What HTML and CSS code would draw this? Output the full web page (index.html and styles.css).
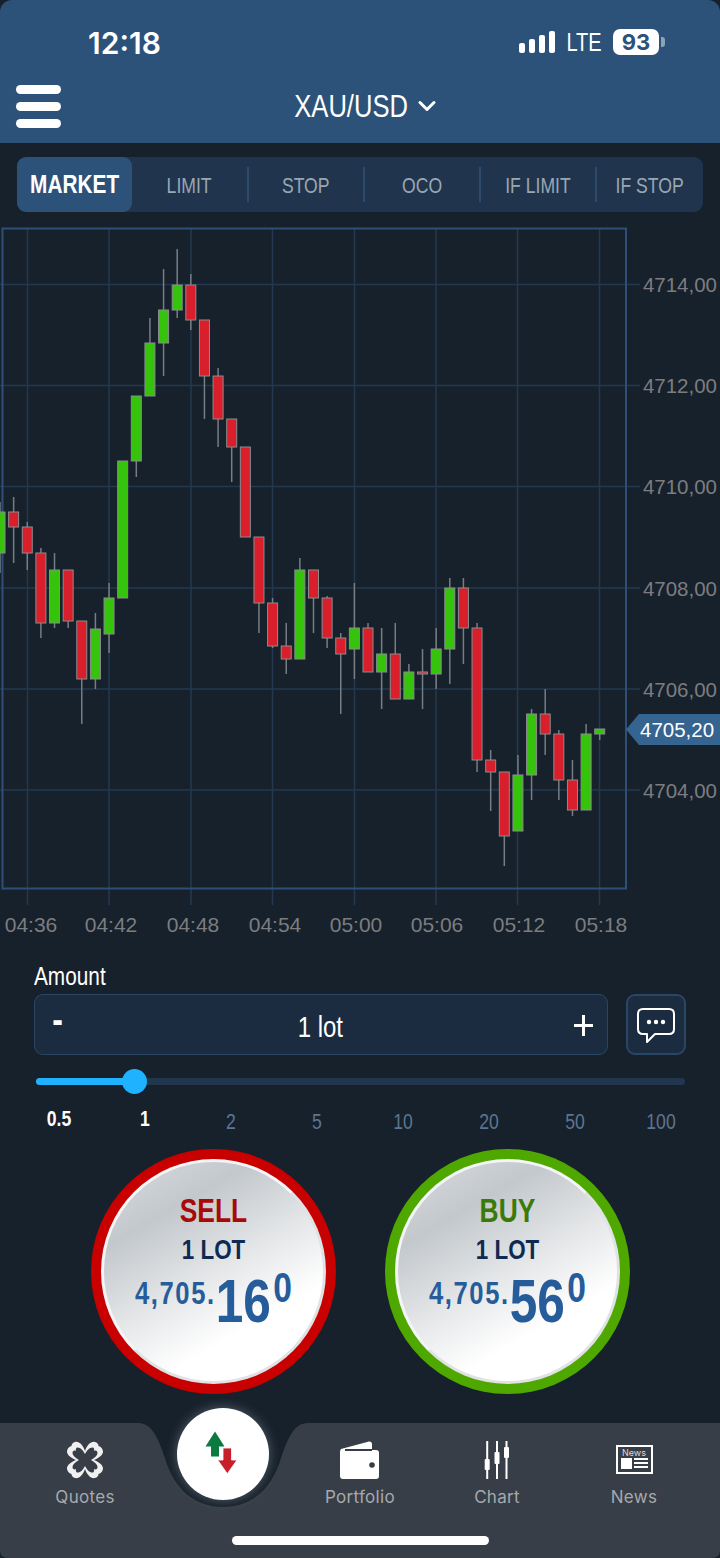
FILE: index.html
```html
<!DOCTYPE html>
<html lang="en">
<head>
    <meta charset="UTF-8">
    <meta name="viewport" content="width=device-width, initial-scale=1.0">
    <title>XAU/USD</title>
    <link rel="stylesheet" href="styles.css">
</head>
<body>
    <div class="phone">
        <header class="top">
            <div class="status">
                <span class="clock">12:18</span>
                <div class="status-right">
                    <svg class="signal" width="36" height="24" viewBox="0 0 36 24">
                        <rect x="0" y="13" width="6" height="10" rx="2"/>
                        <rect x="10" y="9" width="6" height="14" rx="2"/>
                        <rect x="20" y="5" width="6" height="18" rx="2"/>
                        <rect x="30" y="1" width="6" height="22" rx="2"/>
                    </svg>
                    <span class="lte narrow">LTE</span>
                    <div class="battery"><span>93</span></div>
                    <div class="battery-tip"></div>
                </div>
            </div>
            <div class="title-row">
                <div class="burger"><span></span><span></span><span></span></div>
                <div class="pair">
                    <span class="pair-name narrow">XAU/USD</span>
                    <svg width="18" height="12" viewBox="0 0 18 12"><path d="M2 2.5 L9 9.5 L16 2.5" fill="none" stroke="#fff" stroke-width="3" stroke-linecap="round" stroke-linejoin="round"/></svg>
                </div>
            </div>
        </header>

        <nav class="tabs">
            <div class="tab active"><span class="narrow">MARKET</span></div>
            <div class="tab"><span class="narrow">LIMIT</span></div>
            <div class="tab"><span class="narrow">STOP</span></div>
            <div class="tab"><span class="narrow">OCO</span></div>
            <div class="tab"><span class="narrow">IF LIMIT</span></div>
            <div class="tab"><span class="narrow">IF STOP</span></div>
        </nav>

        <section class="chart">
            <svg id="chart-svg" width="720" height="725" viewBox="0 215 720 725"></svg>
            <div class="price-tag">4705,20</div>
        </section>

        <section class="order">
            <div class="amount-label">Amount</div>
            <div class="amount-row">
                <div class="amount-box">
                    <span class="minus narrow">-</span>
                    <span class="lot narrow">1 lot</span>
                    <svg class="plus" width="19" height="21" viewBox="0 0 19 21"><path d="M9.5 0 V21 M0 10.5 H19" stroke="#fff" stroke-width="3"/></svg>
                </div>
                <div class="comment-btn">
                    <svg width="40" height="38" viewBox="0 0 40 38">
                        <path d="M7 2 H33 Q38 2 38 7 V22 Q38 27 33 27 H19 L11 35 V27 H7 Q2 27 2 22 V7 Q2 2 7 2 Z" fill="none" stroke="#fff" stroke-width="2" stroke-linejoin="round"/>
                        <circle cx="13" cy="15" r="2.2" fill="#fff"/>
                        <circle cx="20" cy="15" r="2.2" fill="#fff"/>
                        <circle cx="27" cy="15" r="2.2" fill="#fff"/>
                    </svg>
                </div>
            </div>
            <div class="slider">
                <div class="slider-fill"></div>
                <div class="slider-knob"></div>
            </div>
            <div class="steps">
                <span class="step on">0.5</span>
                <span class="step on">1</span>
                <span class="step">2</span>
                <span class="step">5</span>
                <span class="step">10</span>
                <span class="step">20</span>
                <span class="step">50</span>
                <span class="step">100</span>
            </div>
        </section>

        <section class="trade">
            <div class="round sell">
                <div class="face">
                    <div class="side narrow">SELL</div>
                    <div class="qty narrow">1 LOT</div>
                    <div class="quote narrow"><span class="q-small">4,705.</span><span class="q-big">16</span><span class="q-sup">0</span></div>
                </div>
            </div>
            <div class="round buy">
                <div class="face">
                    <div class="side narrow">BUY</div>
                    <div class="qty narrow">1 LOT</div>
                    <div class="quote narrow"><span class="q-small">4,705.</span><span class="q-big">56</span><span class="q-sup">0</span></div>
                </div>
            </div>
        </section>

        <footer class="bottom">
            <svg class="notch" width="720" height="150" viewBox="0 0 720 150">
                <path d="M8 150 Q0 150 0 142 V15 H138 C152 15 158 30 165 50 C172 75 190 99 223 99 C256 99 274 75 281 50 C288 30 294 15 308 15 H720 V142 Q720 150 712 150 Z" fill="#383e47"/>
            </svg>
            <div class="nav">
                <div class="nav-item quotes">
                    <svg width="38" height="38" viewBox="0 0 38 38">
                        <path d="M19 10 C17 4 13 0 9 1 C7 1.5 5.5 3 5.5 5 C3 5.5 1 8 1 10.5 C1 14 5 17 10 19 C5 21 1 24 1 27.5 C1 30 3 32.5 5.5 33 C5.5 35 7 36.5 9 37 C13 38 17 34 19 28 C21 34 25 38 29 37 C31 36.5 32.5 35 32.5 33 C35 32.5 37 30 37 27.5 C37 24 33 21 28 19 C33 17 37 14 37 10.5 C37 8 35 5.5 32.5 5 C32.5 3 31 1.5 29 1 C25 0 21 4 19 10 Z" fill="#f0f0f0"/>
                        <path d="M19 13 C17 9 14 6 11 6.5 C10 7 9.5 9 10 10 C8 9 6.5 10 6.5 12 C6.5 14 9 17 13 19 C9 21 6.5 24 6.5 26 C6.5 28 8 29 10 28 C9.5 29 10 31 11 31.5 C14 32 17 29 19 25 C21 29 24 32 27 31.5 C28 31 28.5 29 28 28 C30 29 31.5 28 31.5 26 C31.5 24 29 21 25 19 C29 17 31.5 14 31.5 12 C31.5 10 30 9 28 10 C28.5 9 28 7 27 6.5 C24 6 21 9 19 13 Z" fill="#383e47"/>
                    </svg>
                    <span>Quotes</span>
                </div>
                <div class="nav-item portfolio">
                    <svg width="40" height="38" viewBox="0 0 40 38">
                        <path d="M1 8 L29 0.5 Q32 0 32 3 V9 H36 Q39 9 39 12 V35 Q39 38 36 38 H3 Q0 38 0 35 V10 Z" fill="#fff"/>
                        <path d="M5 9 H32" stroke="#383e47" stroke-width="2"/>
                        <circle cx="32" cy="24" r="2.8" fill="#383e47"/>
                    </svg>
                    <span>Portfolio</span>
                </div>
                <div class="nav-item chart-nav">
                    <svg width="28" height="38" viewBox="0 0 28 38">
                        <path d="M4.2 0 V38 M14 0 V38 M23.5 0 V38" stroke="#fff" stroke-width="2"/>
                        <rect x="1.7" y="18" width="5" height="11" rx="1" fill="#fff"/>
                        <rect x="11.5" y="11" width="5" height="12" rx="1" fill="#fff"/>
                        <rect x="21" y="6" width="5" height="11" rx="1" fill="#fff"/>
                    </svg>
                    <span>Chart</span>
                </div>
                <div class="nav-item news">
                    <div class="news-icon">
                        <div class="news-word">News</div>
                        <div class="news-body"><i></i><b></b></div>
                    </div>
                    <span>News</span>
                </div>
            </div>
            <div class="center-btn">
                <svg width="32" height="43" viewBox="0 0 32 43">
                    <path d="M10 0.5 L19.5 15.5 H14 V25.5 H6 V15.5 H0.5 Z" fill="#0b7a3e"/>
                    <path d="M18 17 H26.5 V29 H32 L22.3 42.7 L12.7 29 H18 Z" fill="#c8202a" stroke="#fff" stroke-width=".8"/>
                </svg>
            </div>
            <div class="home-bar"></div>
        </footer>
    </div>
    <script src="chart.js"></script>
</body>
</html>
```

FILE: styles.css
```css
* {
    box-sizing: border-box;
}
html, body {
    margin: 0;
    padding: 0;
    background: #17212b;
}
body {
    width: 720px;
    height: 1558px;
    overflow: hidden;
    font-family: "Liberation Sans", Arial, sans-serif;
}
/* no condensed family is available, so squeeze the regular one */
.narrow {
    display: inline-block;
    transform: scaleX(.8);
}
.phone {
    width: 720px;
    height: 1558px;
    display: flex;
    flex-direction: column;
    background: #17212b;
    position: relative;
}

/* header */
.top {
    height: 143px;
    background: #2c5279;
    border-radius: 12px 12px 0 0;
    color: #fff;
}
.status {
    height: 76px;
    display: flex;
    justify-content: space-between;
    align-items: flex-start;
    padding: 24px 55px 0 88px;
}
.clock {
    font-family: Inter, sans-serif;
    font-size: 30px;
    line-height: 36px;
    font-weight: 600;
    margin-top: 1px;
}
.status-right {
    display: flex;
    align-items: center;
    height: 36px;
}
.signal {
    fill: #fff;
    margin-right: 7px;
}
.lte {
    font-size: 25px;
    margin-right: 7px;
}
.battery {
    width: 46px;
    height: 26px;
    border-radius: 7px;
    background: #fff;
    color: #2c5279;
    font-weight: 700;
    font-size: 22px;
    line-height: 26px;
    text-align: center;
    font-family: Inter, sans-serif;
}
.battery-tip {
    width: 4px;
    height: 10px;
    margin-left: 2px;
    border-radius: 0 3px 3px 0;
    background: #8da3b8;
}
.title-row {
    height: 60px;
    position: relative;
    display: flex;
    justify-content: center;
    align-items: center;
}
.burger {
    position: absolute;
    left: 16px;
    top: 9px;
    width: 45px;
    display: flex;
    flex-direction: column;
    gap: 8px;
}
.burger span {
    height: 9px;
    border-radius: 5px;
    background: #fff;
}
.pair {
    display: flex;
    align-items: center;
    gap: 10px;
    font-size: 32px;
    margin-left: 10px;
}
.pair-name {
    margin: 0 -14px;
}

/* order type tabs */
.tabs {
    margin: 14px 17px 0;
    height: 55px;
    background: #20354d;
    border-radius: 9px;
    display: flex;
    align-items: center;
    color: #9aa7b3;
    font-size: 22px;
}
.tab {
    height: 35px;
    width: 116px;
    display: flex;
    align-items: center;
    justify-content: center;
    border-right: 2px solid #2c4a6c;
    padding-top: 3px;
    white-space: nowrap;
}
.tab:nth-child(2) {
    width: 117px;
}
.tab:last-child {
    border-right: 0;
    width: 106px;
}
.tab.active {
    width: 115px;
    height: 55px;
    border-right: 0;
    border-radius: 9px;
    background: #2c5279;
    color: #fff;
    font-size: 26px;
    font-weight: 700;
    padding-top: 0;
}

/* chart */
.chart {
    position: relative;
    height: 725px;
    margin-top: 3px;
}
.chart svg {
    display: block;
}
.chart text {
    font-family: "Liberation Sans", sans-serif;
    font-size: 20.5px;
    fill: #7b7d80;
}
.chart text.time {
    font-size: 21px;
}
.price-tag {
    position: absolute;
    left: 626px;
    top: 499px;
    width: 94px;
    height: 31px;
    background: #34648f;
    color: #fff;
    font-size: 20.5px;
    line-height: 31px;
    padding-left: 14px;
    clip-path: polygon(13px 0, 100% 0, 100% 100%, 13px 100%, 0 50%);
}

/* amount */
.order {
    height: 212px;
    padding: 0 34px;
    color: #fff;
}
.amount-label {
    font-size: 26px;
    line-height: 30px;
    margin-top: 21px;
    transform: scaleX(.8);
    transform-origin: left;
}
.amount-row {
    display: flex;
    gap: 18px;
    margin-top: 3px;
}
.amount-box {
    flex: 1;
    height: 61px;
    display: flex;
    align-items: center;
    justify-content: space-between;
    background: #1c2c40;
    border: 1px solid #2a4666;
    border-radius: 9px;
    padding: 0 14px 0 16px;
}
.minus {
    font-size: 40px;
    font-weight: 700;
    line-height: 40px;
    margin-top: -12px;
}
.lot {
    font-size: 30px;
    margin: 5px 0 0 2px;
}
.plus {
    display: block;
    margin-top: 1px;
}
.comment-btn {
    width: 60px;
    height: 61px;
    padding-top: 2px;
    display: flex;
    align-items: center;
    justify-content: center;
    background: #1c2c40;
    border: 2px solid #2a4666;
    border-radius: 9px;
}
.slider {
    position: relative;
    height: 7px;
    margin: 23px 1px 0 2px;
    background: #22364e;
    border-radius: 4px;
}
.slider-fill {
    width: 99px;
    height: 7px;
    border-radius: 4px;
    background: #1fb3ff;
}
.slider-knob {
    position: absolute;
    left: 86px;
    top: -9px;
    width: 25px;
    height: 25px;
    border-radius: 50%;
    background: #1fb3ff;
}
.steps {
    display: grid;
    grid-template-columns: repeat(8, 86px);
    margin: 24px 0 0 -18px;
    color: #5d7591;
    font-size: 22px;
    line-height: 26px;
    text-align: center;
}
.step {
    transform: scaleX(.8);
}
.step.on {
    color: #fff;
    font-weight: 700;
    margin-top: -3px;
}

/* sell / buy */
.trade {
    height: 245px;
    margin-top: -3px;
    display: flex;
    justify-content: center;
    gap: 49px;
}
.round {
    width: 245px;
    height: 245px;
    border-radius: 50%;
    padding: 10px;
}
.sell {
    background: #c80000;
}
.buy {
    background: #4fa800;
}
.face {
    width: 225px;
    height: 225px;
    border-radius: 50%;
    border: 3px solid #f4f5f6;
    border-right-color: #e0e2e4;
    border-bottom-color: #e0e2e4;
    background: linear-gradient(150deg, #cdd1d5 14%, #c3c8cc 25%, #e4e6e8 50%, #fff 72%);
    text-align: center;
    padding-top: 31px;
}
.side {
    display: block;
    font-size: 33px;
    line-height: 36px;
    font-weight: 700;
}
.sell .side {
    color: #a80a0a;
}
.buy .side {
    color: #3b7a08;
}
.qty {
    display: block;
    font-size: 28px;
    line-height: 30px;
    font-weight: 700;
    color: #0e2a50;
    margin-top: 6px;
}
.quote {
    display: block;
    color: #265c99;
    font-weight: 700;
    white-space: nowrap;
    height: 62px;
    line-height: 62px;
    margin-top: 2px;
}
.quote span {
    line-height: 1;
}
.q-small {
    font-size: 32px;
    vertical-align: 18px;
    letter-spacing: 2px;
}
.q-big {
    font-size: 62px;
}
.q-sup {
    font-size: 42px;
    vertical-align: 20px;
    margin-left: 3px;
}

/* bottom nav */
.bottom {
    position: absolute;
    left: 0;
    right: 0;
    bottom: 0;
    height: 150px;
}
.notch {
    position: absolute;
    left: 0;
    top: 0;
    display: block;
}
.nav {
    position: absolute;
    top: 32px;
    left: 0;
    right: 0;
    height: 68px;
}
.nav-item {
    position: absolute;
    top: 0;
    width: 100px;
    height: 68px;
    display: flex;
    flex-direction: column;
    align-items: center;
    justify-content: space-between;
    color: #a6a9ad;
    font-family: Inter, sans-serif;
    font-size: 17px;
    line-height: 22px;
    letter-spacing: .3px;
}
.nav-item svg {
    margin-top: 1px;
}
.quotes {
    left: 35px;
}
.portfolio {
    left: 310px;
}
.chart-nav {
    left: 447px;
}
.news {
    left: 584px;
}
.news-icon {
    width: 37px;
    height: 29px;
    margin-top: 5px;
    border: 2px solid #fff;
    padding: 1px 3px;
}
.news-word {
    color: #d9dadb;
    font-size: 9px;
    line-height: 9px;
    text-align: center;
    letter-spacing: 0;
}
.news-body {
    display: flex;
    gap: 2px;
    margin-top: 1px;
}
.news-body i {
    display: block;
    width: 11px;
    height: 11px;
    background: #fff;
}
.news-body b {
    display: block;
    flex: 1;
    height: 11px;
    background: repeating-linear-gradient(#fff 0 2px, transparent 2px 4px);
}
.center-btn {
    position: absolute;
    left: 177px;
    top: 0;
    width: 92px;
    height: 92px;
    border-radius: 50%;
    background: #fff;
    box-shadow: 0 0 12px rgba(160, 175, 190, .45);
    display: flex;
    align-items: center;
    justify-content: center;
}
.center-btn svg {
    margin: -3px 0 0 -4px;
}
.home-bar {
    position: absolute;
    left: 232px;
    bottom: 13px;
    width: 257px;
    height: 9px;
    border-radius: 5px;
    background: #fff;
}
```

FILE: chart.js
```js
// [wick top, body top, body bottom, wick bottom, up?] one candle every 13.63px
const candles = [
    [502, 512, 553, 573, 1], [497, 512, 527, 563, 0], [522, 527, 553, 570, 0],
    [548, 553, 623, 638, 0], [553, 570, 623, 628, 1], [570, 570, 621, 628, 0],
    [621, 621, 679, 724, 0], [613, 629, 679, 689, 1], [583, 598, 634, 653, 1],
    [461, 461, 598, 598, 1], [396, 396, 461, 477, 1], [318, 343, 396, 396, 1],
    [269, 310, 343, 376, 1], [249, 285, 310, 318, 1], [274, 285, 320, 330, 0],
    [320, 320, 376, 419, 0], [368, 376, 419, 447, 0], [419, 419, 447, 482, 0],
    [447, 447, 537, 537, 0], [537, 537, 603, 633, 0], [598, 603, 646, 648, 0],
    [623, 646, 659, 674, 0], [558, 570, 659, 659, 1], [570, 570, 598, 633, 0],
    [596, 598, 638, 648, 0], [633, 638, 654, 714, 0], [583, 628, 649, 679, 1],
    [623, 628, 672, 672, 0], [628, 654, 672, 709, 1], [623, 654, 699, 699, 0],
    [664, 672, 699, 699, 1], [649, 672, 674, 709, 0], [628, 649, 674, 689, 1],
    [578, 588, 649, 684, 1], [578, 588, 628, 664, 0], [623, 628, 760, 772, 0],
    [750, 760, 772, 811, 0], [772, 772, 836, 866, 0], [755, 775, 831, 831, 1],
    [709, 714, 775, 800, 1], [689, 714, 734, 755, 0], [730, 734, 780, 800, 0],
    [760, 780, 810, 816, 0], [724, 734, 810, 810, 1], [729, 729, 734, 740, 1]
];
const rows = [[284.5, '4714,00'], [385.5, '4712,00'], [486.5, '4710,00'], [588, '4708,00'], [689, '4706,00'], [790, '4704,00']];
const cols = [[27.5, '04:36', 31], [109, '04:42', 111], [191, '04:48', 193], [272.5, '04:54', 275], [354.5, '05:00', 356], [436, '05:06', 437], [517.5, '05:12', 519], [599.5, '05:18', 601]];

const svg = document.getElementById('chart-svg');

function add(name, attrs, text) {
    const el = document.createElementNS('http://www.w3.org/2000/svg', name);
    for (const k in attrs) el.setAttribute(k, attrs[k]);
    if (text) el.textContent = text;
    svg.appendChild(el);
}

const GRID = '#233850';
rows.forEach(([y, label]) => {
    add('line', { x1: 0, x2: 640, y1: y, y2: y, stroke: GRID, 'stroke-width': 1.5 });
    add('text', { x: 717, y: y + 7.5, 'text-anchor': 'end' }, label);
});
cols.forEach(([x, label, tx]) => {
    add('line', { x1: x, x2: x, y1: 228, y2: 905, stroke: GRID, 'stroke-width': 1.5 });
    add('text', { class: 'time', x: tx, y: 932, 'text-anchor': 'middle' }, label);
});
add('rect', { x: 2.5, y: 228.5, width: 623.5, height: 660, fill: 'none', stroke: '#2e4f78', 'stroke-width': 2 });

candles.forEach(([top, open, close, bottom, up], i) => {
    const x = i * 13.63;
    add('line', { x1: x, x2: x, y1: top, y2: bottom, stroke: '#777d84', 'stroke-width': 1.5 });
    add('rect', { x: x - 5, y: open, width: 10, height: close - open, fill: up ? '#36c30c' : '#d81f2b', stroke: '#8a8d8f', 'stroke-width': 1 });
});
```
